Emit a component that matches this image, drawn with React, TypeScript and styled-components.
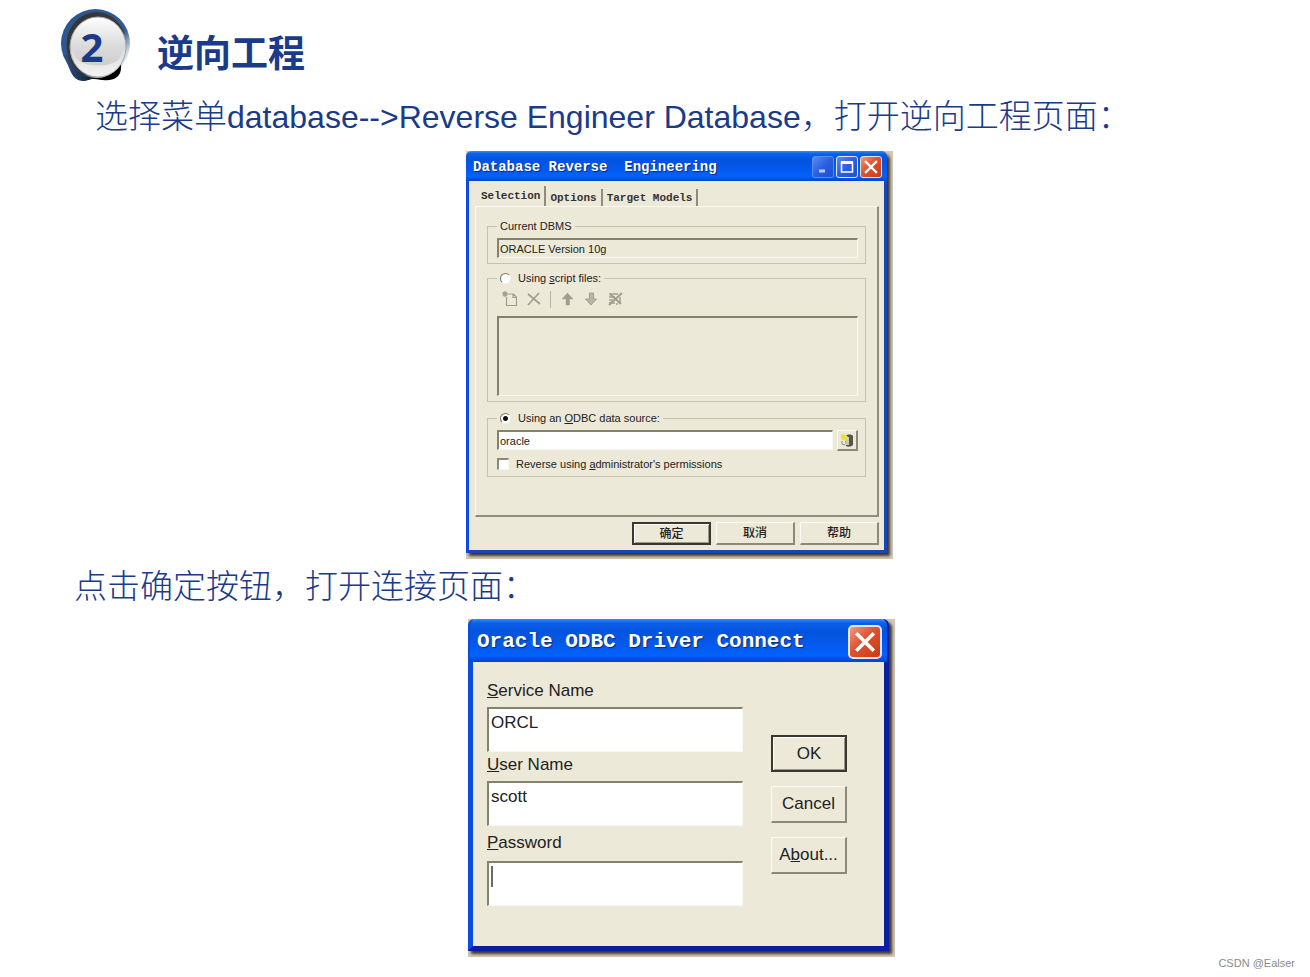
import React from "react";
import styled, { createGlobalStyle, css } from "styled-components";

const navy = "#1a3a8a";
const face = "#ece9d8";
const sans = `"Liberation Sans", "Noto Sans CJK SC", sans-serif`;
const mono = `"Liberation Mono", "Noto Sans CJK SC", monospace`;

const GlobalStyle = createGlobalStyle`
  *, *::before, *::after { box-sizing: border-box; }
  body { margin: 0; background: #fff; font-family: ${sans}; }
  button, input { font-family: inherit; margin: 0; }
`;

const Page = styled.main`
  display: flex;
  flex-direction: column;
  padding-top: 9px;
`;

const Header = styled.header`
  display: flex;
  align-items: center;
  gap: 26px;
  padding-left: 61px;
`;

const BadgeArt = styled.svg`
  display: block;
  width: 70px;
  height: 72px;
`;

const Title = styled.h1`
  margin: 0;
  padding-top: 12px;
  font: bold 37px/40px "Noto Sans CJK SC", sans-serif;
  color: ${navy};
`;

const Step = styled.p<{ $indent: number }>`
  margin: 0;
  padding-left: ${(p) => p.$indent}px;
  font-size: 33px;
  font-weight: 300;
  line-height: 36px;
  color: ${navy};
`;

const Latin = styled.span`
  font-size: 32px;
`;

const StepBlock = styled.section<{ $top: number; $gap: number }>`
  display: flex;
  flex-direction: column;
  gap: ${(p) => p.$gap}px;
  margin-top: ${(p) => p.$top}px;
`;

const Figure = styled.figure<{ $shift: number }>`
  display: flex;
  justify-content: center;
  margin: 0;
  padding-left: ${(p) => p.$shift}px;
`;

const Backdrop = styled.div`
  width: 427px;
  padding: 0 6px 6px 0;
  overflow: hidden;
  background: #d3c8b8;
`;

const Window = styled.div<{ $edge: number; $rim: string }>`
  display: flex;
  flex-direction: column;
  border: solid ${(p) => p.$rim};
  border-width: 0 ${(p) => p.$edge}px ${(p) => p.$edge}px;
  border-left: ${(p) => p.$edge}px solid #0a4be0;
  border-radius: 6px 6px 0 0;
  box-shadow: 3px 3px 3px #3c352c;
  background: ${face};
  color: #222;
`;

const TitleBar = styled.div<{ $large?: boolean }>`
  display: flex;
  align-items: center;
  justify-content: space-between;
  height: ${(p) => (p.$large ? 43 : 30)}px;
  margin: 0 -3px;
  padding: 2px 5px 0 7px;
  border-radius: 6px 6px 0 0;
  background: linear-gradient(#2f8bf8 0, #0a5fe8 10%, #0353dd 30%, #0559ee 60%, #0262fc 85%, #0144c6 100%);
  font: bold ${(p) => (p.$large ? 21 : 14)}px/${(p) => (p.$large ? 24 : 18)}px ${mono};
  color: #fff;
  white-space: pre;
  text-shadow: 1px 1px 1px #0a2a80;
`;

const Controls = styled.div`
  display: flex;
  gap: 2px;
`;

const ControlButton = styled.button<{ $close?: boolean; $dim?: boolean; $size: number }>`
  display: flex;
  width: ${(p) => p.$size}px;
  height: ${(p) => p.$size}px;
  padding: 0;
  border: ${(p) => (p.$size > 30 ? 2 : 1)}px solid ${(p) => (p.$dim ? "#5b8cf0" : "#dfe6fa")};
  border-radius: ${(p) => (p.$size > 30 ? 5 : 3)}px;
  background: ${(p) =>
    p.$close
      ? "linear-gradient(135deg, #f09a80, #df5130 45%, #c83c14)"
      : "linear-gradient(135deg, #5a8cf2, #2a5fe0 50%, #1e4fd0)"};
  svg { width: 100%; height: 100%; }
`;

const Tabs = styled.div`
  display: flex;
  align-items: flex-end;
  height: 25px;
  padding-left: 8px;
  font: bold 11px/16px ${mono};
`;

const Tab = styled.button<{ $active?: boolean }>`
  height: ${(p) => (p.$active ? 20 : 17)}px;
  padding: 0 4px 0 4px;
  border: 0;
  border-right: 2px solid #8f8d7e;
  background: none;
  font: inherit;
  line-height: ${(p) => (p.$active ? 18 : 16)}px;
  color: #333;
`;

const Panel = styled.div`
  margin: 0 5px 0 6px;
  padding: 12px 11px 38px;
  border: 1px solid #fbfaf4;
  border-right: 2px solid #8f8d7e;
  border-bottom: 2px solid #8f8d7e;
  font-size: 11px;
  line-height: 14px;
`;

const Group = styled.fieldset<{ $top?: number }>`
  min-width: 0;
  margin: ${(p) => p.$top ?? 0}px 0 0;
  padding: 5px 7px 5px 9px;
  border: 1px solid #c3c3b3;
`;

const Legend = styled.legend`
  height: 14px;
  padding: 0 3px;
  line-height: 14px;
`;

const Choice = styled.label`
  display: flex;
  align-items: center;
  gap: 7px;
  height: 14px;
`;

const Radio = styled.input.attrs({ type: "radio" })`
  appearance: none;
  width: 11px;
  height: 11px;
  border: 1px solid #8b897a;
  border-color: #77756a #f4f2e8 #f4f2e8 #77756a;
  border-radius: 50%;
  background: #fff;
  &:checked { background: radial-gradient(circle, #111 0 2px, #fff 3px); }
`;

const Check = styled.input.attrs({ type: "checkbox" })`
  appearance: none;
  width: 12px;
  height: 12px;
  border: solid;
  border-width: 2px 1px 1px 2px;
  border-color: #8b897a #f8f6ee #f8f6ee #8b897a;
  background: #fff;
`;

const sunken = css`
  border: solid;
  border-width: 2px 1px 1px 2px;
  border-color: #84826f #faf9f1 #faf9f1 #84826f;
  border-radius: 0;
  outline: none;
  color: #222;
`;

const SmallInput = styled.input<{ $plain?: boolean }>`
  ${sunken}
  display: block;
  flex: 1;
  width: 100%;
  min-width: 0;
  height: 20px;
  padding: 0 1px;
  font-size: 11px;
  line-height: 16px;
  background: ${(p) => (p.$plain ? face : "#fff")};
`;

const Toolbar = styled.div`
  display: flex;
  align-items: center;
  gap: 8px;
  height: 18px;
  padding-left: 5px;
`;

const ToolButton = styled.button`
  display: block;
  width: 16px;
  height: 16px;
  padding: 0;
  border: 0;
  background: none;
  svg { display: block; }
`;

const ToolDivider = styled.span`
  width: 1px;
  height: 17px;
  background: #b5b3a4;
`;

const ListBox = styled.div`
  ${sunken}
  height: 80px;
  margin-top: 8px;
`;

const SourceRow = styled.div`
  display: flex;
  gap: 4px;
  margin-bottom: 6px;
`;

const raised = css`
  border: solid;
  border-width: 1px 2px 2px 1px;
  border-color: #fbfaf4 #8b897a #8b897a #fbfaf4;
  border-radius: 0;
  background: ${face};
  color: #222;
`;

const BrowseButton = styled.button`
  ${raised}
  width: 21px;
  height: 21px;
  padding: 1px;
  svg { display: block; }
`;

const Actions = styled.div`
  display: flex;
  justify-content: flex-end;
  gap: 5px;
  padding: 5px 5px 5px 0;
`;

const defaultRing = css`
  border: 2px solid #3a382e;
  box-shadow: inset 1px 1px #fff, inset -1px -1px #9c9a8a;
`;

const ActionButton = styled.button<{ $primary?: boolean }>`
  ${raised}
  ${(p) => p.$primary && defaultRing}
  width: 79px;
  height: 23px;
  padding: 0;
  font-size: 12px;
  font-weight: 500;
  line-height: 16px;
`;

const ConnectBody = styled.form`
  display: flex;
  gap: 28px;
  padding: 19px 14px 40px;
  font-size: 17px;
  line-height: 20px;
`;

const Fields = styled.div`
  display: flex;
  flex-direction: column;
  gap: 3px;
  width: 256px;
`;

const Field = styled.label<{ $apart?: boolean }>`
  position: relative;
  display: flex;
  flex-direction: column;
  gap: ${(p) => (p.$apart ? 8 : 6)}px;
  margin-top: ${(p) => (p.$apart ? 4 : 0)}px;
`;

const LargeInput = styled.input`
  ${sunken}
  height: 45px;
  padding: 0 2px 15px;
  font-size: 17px;
  background: #fff;
`;

const Caret = styled.span`
  position: absolute;
  left: 4px;
  bottom: 19px;
  width: 2px;
  height: 21px;
  background: #6a6a6a;
`;

const SideButtons = styled.div`
  display: flex;
  flex-direction: column;
  gap: 14px;
  padding-top: 54px;
`;

const SideButton = styled.button<{ $primary?: boolean }>`
  ${raised}
  ${(p) => p.$primary && defaultRing}
  width: 76px;
  height: 37px;
  padding: 0;
  font-size: 17px;
  line-height: 20px;
`;

const Credit = styled.footer`
  padding-right: 15px;
  font-size: 11px;
  line-height: 13px;
  text-align: right;
  color: #8a8a8a;
`;

function Badge() {
  return (
    <BadgeArt viewBox="0 0 70 72" role="img" aria-label="2">
      <defs>
        <linearGradient id="ring" x1="0" y1="0" x2="1" y2="1">
          <stop offset="0" stopColor="#2b5489" />
          <stop offset="0.62" stopColor="#2f5d99" />
          <stop offset="0.8" stopColor="#d4deec" />
          <stop offset="1" stopColor="#fff" />
        </linearGradient>
        <linearGradient id="shade" x1="0" y1="0" x2="1" y2="1">
          <stop offset="0" stopColor="#333" />
          <stop offset="0.62" stopColor="#3a3b3d" />
          <stop offset="0.8" stopColor="#dcdcdc" />
        </linearGradient>
        <linearGradient id="foot" x1="0" y1="0" x2="1" y2="0">
          <stop offset="0" stopColor="#2c5285" />
          <stop offset="0.4" stopColor="#1c2c44" />
          <stop offset="0.6" stopColor="#000" />
        </linearGradient>
        <linearGradient id="disc" x1="0" y1="0" x2="0" y2="1">
          <stop offset="0" stopColor="#fff" />
          <stop offset="0.5" stopColor="#d8d8d8" />
          <stop offset="1" stopColor="#f4f4f4" />
        </linearGradient>
        <linearGradient id="gloss" x1="0" y1="0" x2="0" y2="1">
          <stop offset="0" stopColor="#f6f6f6" />
          <stop offset="1" stopColor="#c6c6c6" />
        </linearGradient>
      </defs>
      <circle cx="34.5" cy="34.5" r="34.5" fill="url(#ring)" />
      <path d="M2 45C9 58 10 72 22 72C27 72 28 70 33 70C39 70 41 72 48 71C57 70 61 65 60 54Z" fill="url(#foot)" />
      <ellipse cx="35.5" cy="36" rx="30" ry="33" fill="url(#shade)" />
      <ellipse cx="37" cy="38" rx="28" ry="30" fill="url(#disc)" stroke="#a8a8a8" />
      <path d="M11 35a26 26 0 0 1 51 0c0 8-2 13-6 17c-10 6-28 6-38 0c-4-4-7-9-7-17z" fill="url(#gloss)" opacity="0.75" />
      <text x="31" y="53" textAnchor="middle" fontFamily="Noto Sans, sans-serif" fontWeight="700" fontSize="40" fill={navy}>
        2
      </text>
    </BadgeArt>
  );
}

function CloseGlyph() {
  return (
    <svg viewBox="0 0 20 20">
      <path d="M5 5L15 15M15 5L5 15" stroke="#fff" strokeWidth="2.4" strokeLinecap="square" />
    </svg>
  );
}

const toolStroke = { fill: "none", stroke: "#a09e90", strokeWidth: 1.4 };

function Tool({ label, children }: { label: string; children: React.ReactNode }) {
  return (
    <ToolButton type="button" aria-label={label}>
      <svg width="16" height="16" viewBox="0 0 16 16" {...toolStroke}>
        {children}
      </svg>
    </ToolButton>
  );
}

function ReverseEngineeringDialog() {
  return (
    <Backdrop>
      <Window $edge={3} $rim="#1a45b4" role="dialog" aria-label="Database Reverse Engineering">
        <TitleBar>
          <span>{"Database Reverse  Engineering"}</span>
          <Controls>
            <ControlButton type="button" $size={22} $dim aria-label="Minimize">
              <svg viewBox="0 0 20 20">
                <path d="M6 14H12" stroke="#b9cdf8" strokeWidth="3" />
              </svg>
            </ControlButton>
            <ControlButton type="button" $size={22} aria-label="Maximize">
              <svg viewBox="0 0 20 20">
                <path d="M4.500 5.500H15.500V15H4.500Z" fill="none" stroke="#fff" strokeWidth="1.5" />
                <path d="M4 5.500H16" stroke="#fff" strokeWidth="3" />
              </svg>
            </ControlButton>
            <ControlButton type="button" $size={22} $close aria-label="Close">
              <CloseGlyph />
            </ControlButton>
          </Controls>
        </TitleBar>
        <Tabs role="tablist">
          <Tab type="button" role="tab" $active aria-selected>Selection</Tab>
          <Tab type="button" role="tab">Options</Tab>
          <Tab type="button" role="tab">Target Models</Tab>
        </Tabs>
        <Panel>
          <Group>
            <Legend>Current DBMS</Legend>
            <SmallInput $plain readOnly aria-label="Current DBMS" value="ORACLE Version 10g" />
          </Group>
          <Group $top={7}>
            <Legend>
              <Choice>
                <Radio name="source" />
                <span>Using <u>s</u>cript files:</span>
              </Choice>
            </Legend>
            <Toolbar>
              <Tool label="Add file">
                <path d="M4.500 6V14.500H14.500V6L11.500 3H7M11 3V6.500H14.500M1 1L5 5M5 1L1 5M3 0V6M0 3H7" strokeWidth="1.2" />
              </Tool>
              <Tool label="Remove">
                <path d="M2 3L14 13M13 2L2 14" strokeWidth="1.7" />
              </Tool>
              <ToolDivider />
              <Tool label="Move up">
                <path d="M8.500 2L14 8H10.500V14H7V8H3Z" fill="#a09e90" strokeWidth="0.500" />
              </Tool>
              <Tool label="Move down">
                <path d="M8 14L13.500 8H10.500V2H6.500V8H2.500Z" fill="#b8b6a8" strokeWidth="1" />
              </Tool>
              <Tool label="Clear all">
                <path d="M2 3H11M2 6H8M2 9H6M2 12H8M13 6V13M10 12V14" strokeWidth="2" stroke="#b4b2a4" />
                <path d="M2 14L15 2M3 3L14 13" strokeWidth="2" />
              </Tool>
            </Toolbar>
            <ListBox role="listbox" aria-label="Script files" />
          </Group>
          <Group $top={9}>
            <Legend>
              <Choice>
                <Radio name="source" defaultChecked />
                <span>Using an <u>O</u>DBC data source:</span>
              </Choice>
            </Legend>
            <SourceRow>
              <SmallInput defaultValue="oracle" aria-label="ODBC data source" />
              <BrowseButton type="button" aria-label="Choose data source">
                <svg width="16" height="16" viewBox="0 0 16 16">
                  <path d="M6 4C8 2 13 2 14 4V13C12 15 9 15 7 14Z" fill="#55554c" />
                  <path d="M7 5H10V13H7Z" fill="#c9c8bc" />
                  <path d="M2 2L7 3L10 6L7 9L2 7Z" fill="#e6e23a" />
                  <path d="M3 9V12L6 13" fill="none" stroke="#8b8a7c" />
                </svg>
              </BrowseButton>
            </SourceRow>
            <Choice>
              <Check />
              <span>Reverse using <u>a</u>dministrator's permissions</span>
            </Choice>
          </Group>
        </Panel>
        <Actions>
          <ActionButton type="button" $primary>确定</ActionButton>
          <ActionButton type="button">取消</ActionButton>
          <ActionButton type="button">帮助</ActionButton>
        </Actions>
      </Window>
    </Backdrop>
  );
}

function ConnectDialog() {
  return (
    <Backdrop>
      <Window $edge={5} $rim="#0a1fa0" role="dialog" aria-label="Oracle ODBC Driver Connect">
        <TitleBar $large>
          <span>Oracle ODBC Driver Connect</span>
          <ControlButton type="button" $size={34} $close aria-label="Close">
            <CloseGlyph />
          </ControlButton>
        </TitleBar>
        <ConnectBody>
          <Fields>
            <Field>
              <span><u>S</u>ervice Name</span>
              <LargeInput defaultValue="ORCL" />
            </Field>
            <Field>
              <span><u>U</u>ser Name</span>
              <LargeInput defaultValue="scott" />
            </Field>
            <Field $apart>
              <span><u>P</u>assword</span>
              <LargeInput type="password" />
              <Caret />
            </Field>
          </Fields>
          <SideButtons>
            <SideButton type="button" $primary>OK</SideButton>
            <SideButton type="button">Cancel</SideButton>
            <SideButton type="button">A<u>b</u>out...</SideButton>
          </SideButtons>
        </ConnectBody>
      </Window>
    </Backdrop>
  );
}

export default function App() {
  return (
    <>
      <GlobalStyle />
      <Page lang="zh-CN">
        <Header>
          <Badge />
          <Title>逆向工程</Title>
        </Header>
        <StepBlock $top={18} $gap={16}>
          <Step $indent={95}>
            选择菜单<Latin>database--&gt;Reverse Engineer Database</Latin>，打开逆向工程页面：
          </Step>
          <Figure $shift={49}>
            <ReverseEngineeringDialog />
          </Figure>
        </StepBlock>
        <StepBlock $top={10} $gap={14}>
          <Step $indent={74}>点击确定按钮，打开连接页面：</Step>
          <Figure $shift={53}>
            <ConnectDialog />
          </Figure>
        </StepBlock>
        <Credit>CSDN @Ealser</Credit>
      </Page>
    </>
  );
}
